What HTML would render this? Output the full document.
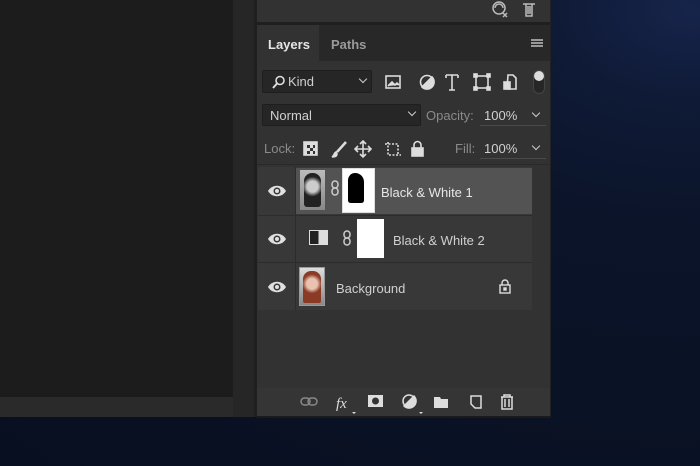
<!DOCTYPE html>
<html><head><style>
*{margin:0;padding:0;box-sizing:border-box}
body{width:700px;height:466px;overflow:hidden;position:relative;font-family:"Liberation Sans",sans-serif;background:radial-gradient(ellipse at 690px 10px,#17244a 0,#0f1a36 140px,#0b1429 320px,#080f20 100%)}
.a{position:absolute}
.t{color:#d0d0d0;font-size:13px}
.g{color:#8a8a8a;font-size:13px}
.dd{background:#262626;border:1px solid #1e1e1e;border-radius:2px}
</style></head><body>
<div class="a" style="left:0;top:0;width:233px;height:397px;background:#1c1c1c"></div>
<div class="a" style="left:0;top:397px;width:233px;height:20px;background:#2a2a2a"></div>
<div class="a" style="left:233px;top:0;width:21px;height:417px;background:#262626"></div>
<div class="a" style="left:254px;top:0;width:3px;height:417px;background:#1f1f1f"></div>
<div class="a" style="left:257px;top:0;width:294px;height:417px;background:#323232;border-right:1px solid #222"></div>
<div class="a" style="left:257px;top:22px;width:293px;height:3px;background:#1f1f1f"></div>
<div class="a" style="left:257px;top:25px;width:293px;height:36px;background:#282828"></div>
<div class="a" style="left:257px;top:25px;width:62px;height:37px;background:#323232"></div>
<div class="a" style="left:257px;top:416px;width:294px;height:2px;background:#1a1a1a"></div>
<svg class="a" style="left:490px;top:0" width="50" height="20" viewBox="0 0 50 20"><g fill="none" stroke="#bbb" stroke-width="1.5"><circle cx="9" cy="8" r="6"/><path d="M5 8a4 4 0 0 1 8 0"/><path d="M13 13l4 4M17 13l-4 4"/><path d="M33 4h12M36 4v12h6V4M38 6v8M40 6v8"/></g></svg>
<div class="a t" style="left:268px;top:37px;font-weight:bold;color:#e6e6e6">Layers</div>
<div class="a g" style="left:331px;top:37px;font-weight:bold;color:#9a9a9a">Paths</div>
<div class="a" style="left:531px;top:39px;width:12px;height:8px;border-top:2px solid #999;border-bottom:2px solid #999"><div style="margin-top:1px;height:2px;background:#999"></div></div>
<div class="a dd" style="left:262px;top:70px;width:110px;height:23px"></div>
<svg class="a" style="left:272px;top:75px" width="14" height="14"><circle cx="8" cy="5.5" r="4" fill="none" stroke="#ddd" stroke-width="1.6"/><path d="M5 8.5L1 13" stroke="#ddd" stroke-width="2"/></svg>
<div class="a t" style="left:288px;top:74px">Kind</div>
<div class="a" style="left:360px;top:76px;width:6px;height:6px;border-right:1.5px solid #ccc;border-bottom:1.5px solid #ccc;transform:rotate(45deg)"></div>
<svg class="a" style="left:384px;top:72px" width="140" height="20" fill="none" stroke="#ddd" stroke-width="1.6">
<rect x="2" y="4" width="14" height="12"/><path d="M4 14l4-4 3 3 2-2 2 2" fill="#ddd"/>
<circle cx="43" cy="10" r="6.5"/><path d="M38 15L48 5A6.5 6.5 0 0 1 38 15z" fill="#ddd"/>
<path d="M62 3h12M68 3v15M65 18h6M62 3v3M74 3v3"/>
<rect x="92" y="4" width="12" height="12"/><rect x="90" y="2" width="3" height="3" fill="#ddd"/><rect x="103" y="2" width="3" height="3" fill="#ddd"/><rect x="90" y="15" width="3" height="3" fill="#ddd"/><rect x="103" y="15" width="3" height="3" fill="#ddd"/>
<path d="M124 3h5l3 3v11h-9z"/><rect x="120" y="10" width="6" height="7" fill="#ddd"/>
</svg>
<div class="a" style="left:533px;top:70px;width:12px;height:24px;border-radius:6px;background:#262626;border:1px solid #444"></div>
<div class="a" style="left:534px;top:71px;width:10px;height:10px;border-radius:5px;background:#ddd"></div>
<div class="a dd" style="left:262px;top:104px;width:159px;height:22px"></div>
<div class="a t" style="left:270px;top:108px">Normal</div>
<div class="a" style="left:409px;top:109px;width:6px;height:6px;border-right:1.5px solid #ccc;border-bottom:1.5px solid #ccc;transform:rotate(45deg)"></div>
<div class="a g" style="left:426px;top:108px">Opacity:</div>
<div class="a t" style="left:484px;top:108px">100%</div>
<div class="a" style="left:480px;top:125px;width:66px;height:1px;background:#4a4a4a"></div>
<div class="a" style="left:533px;top:110px;width:6px;height:6px;border-right:1.5px solid #ccc;border-bottom:1.5px solid #ccc;transform:rotate(45deg)"></div>
<div class="a g" style="left:264px;top:141px">Lock:</div>
<svg class="a" style="left:302px;top:139px" width="130" height="20" fill="none" stroke="#ddd" stroke-width="1.6">
<rect x="2" y="3" width="13" height="13" fill="#ddd"/><path d="M5 6h3v3H5zM11 6h2v3h-2zM8 9h3v3H8zM5 12h3v3H5zM11 12h2v3h-2z" fill="#333" stroke="none"/>
<path d="M44 3L35 13" stroke-width="2.5"/><path d="M34 13c-2 1-2 4-4 5 3 0 5-1 5-3z" fill="#ddd"/>
<path d="M61 2v16M53 10h16M58 5l3-3 3 3M58 15l3 3 3-3M56 7l-3 3 3 3M66 7l3 3-3 3"/>
<path d="M83 5h13v11M86 3v13h13" stroke-dasharray="2 1.5"/>
<rect x="110" y="9" width="11" height="8" fill="#ddd"/><path d="M112 9V6a3.5 3.5 0 0 1 7 0v3"/>
</svg>
<div class="a g" style="left:455px;top:141px">Fill:</div>
<div class="a t" style="left:484px;top:141px">100%</div>
<div class="a" style="left:480px;top:158px;width:66px;height:1px;background:#4a4a4a"></div>
<div class="a" style="left:533px;top:143px;width:6px;height:6px;border-right:1.5px solid #ccc;border-bottom:1.5px solid #ccc;transform:rotate(45deg)"></div>
<div class="a" style="left:257px;top:164px;width:293px;height:1px;background:#2a2a2a"></div>
<div class="a" style="left:258px;top:167px;width:274px;height:143px;background:#383838"></div>
<div class="a" style="left:296px;top:168px;width:236px;height:46px;background:#535353"></div>
<div class="a" style="left:258px;top:215px;width:274px;height:1px;background:#2c2c2c"></div>
<div class="a" style="left:258px;top:262px;width:274px;height:1px;background:#2c2c2c"></div>
<div class="a" style="left:295px;top:167px;width:1px;height:143px;background:#2c2c2c"></div>
<svg class="a" style="left:267px;top:183px" width="20" height="115" fill="#e0e0e0"><g><path d="M1 8C5 1 15 1 19 8C15 15 5 15 1 8z"/><circle cx="10" cy="8" r="3.5" fill="#383838"/><circle cx="10" cy="8" r="2"/></g><g transform="translate(0,48)"><path d="M1 8C5 1 15 1 19 8C15 15 5 15 1 8z"/><circle cx="10" cy="8" r="3.5" fill="#383838"/><circle cx="10" cy="8" r="2"/></g><g transform="translate(0,96)"><path d="M1 8C5 1 15 1 19 8C15 15 5 15 1 8z"/><circle cx="10" cy="8" r="3.5" fill="#383838"/><circle cx="10" cy="8" r="2"/></g></svg>
<div class="a" style="left:300px;top:170px;width:25px;height:40px;background:linear-gradient(#bbb,#888);"><div style="margin:3px 4px;width:17px;height:34px;border-radius:8px 8px 3px 3px;background:radial-gradient(circle at 50% 40%,#ccc 25%,#222 45%)"></div></div>
<svg class="a" style="left:330px;top:180px" width="10" height="16" fill="none" stroke="#ccc" stroke-width="1.5"><rect x="2" y="1" width="6" height="7" rx="3"/><rect x="2" y="8" width="6" height="7" rx="3"/></svg>
<div class="a" style="left:342px;top:168px;width:33px;height:45px;border:1px solid #ddd;background:#fff;overflow:hidden"><div style="margin:4px 0 0 5px;width:16px;height:30px;border-radius:8px 10px 3px 3px;background:#000"></div></div>
<div class="a t" style="left:381px;top:185px;color:#e6e6e6">Black &amp; White 1</div>
<div class="a" style="left:309px;top:230px;width:19px;height:15px;border:1.5px solid #ddd;background:linear-gradient(90deg,#222 50%,#ddd 50%)"></div>
<svg class="a" style="left:342px;top:230px" width="10" height="16" fill="none" stroke="#ccc" stroke-width="1.5"><rect x="2" y="1" width="6" height="7" rx="3"/><rect x="2" y="8" width="6" height="7" rx="3"/></svg>
<div class="a" style="left:357px;top:219px;width:27px;height:39px;background:#fff"></div>
<div class="a t" style="left:393px;top:233px">Black &amp; White 2</div>
<div class="a" style="left:299px;top:267px;width:26px;height:39px;background:linear-gradient(#ddd,#888);border:1px solid #999"><div style="margin:3px 3px;width:18px;height:32px;border-radius:8px 8px 2px 2px;background:radial-gradient(circle at 50% 40%,#e9c3b0 25%,#8b3a25 45%)"></div></div>
<div class="a t" style="left:336px;top:281px">Background</div>
<svg class="a" style="left:498px;top:278px" width="14" height="16" fill="none" stroke="#ddd" stroke-width="1.4"><rect x="2" y="7" width="10" height="8"/><path d="M4 7V5a3 3 0 0 1 6 0v2"/><rect x="6" y="10" width="2" height="2" fill="#ddd"/></svg>
<div class="a" style="left:257px;top:388px;width:293px;height:28px;background:#353535"></div>
<svg class="a" style="left:298px;top:392px" width="225" height="24" fill="none" stroke="#ddd" stroke-width="1.5">
<g stroke="#888"><rect x="3" y="6" width="9" height="7" rx="3.5"/><rect x="10" y="6" width="9" height="7" rx="3.5"/></g>
<text x="38" y="16" font-family="Liberation Serif" font-style="italic" font-size="15" fill="#ddd" stroke="none">fx</text>
<path d="M54 20h4l-2 2z" fill="#ddd" stroke="none"/>
<rect x="70" y="3" width="15" height="12" fill="#ddd" stroke="none"/><circle cx="77.5" cy="9" r="3.5" fill="#333" stroke="none"/>
<circle cx="111" cy="9" r="6"/><path d="M106 14L116 4A6 6 0 0 1 106 14z" fill="#ddd"/>
<path d="M121 20h4l-2 2z" fill="#ddd" stroke="none"/>
<path d="M136 5h6l1 2h7v9h-14z" fill="#ddd" stroke="none"/>
<path d="M173 4h10v12h-6l-4-4z"/>
<path d="M203 5h12M206 5V3h6v2M204 5v12h10V5M207 7v8M211 7v8"/>
</svg>
</body></html>
